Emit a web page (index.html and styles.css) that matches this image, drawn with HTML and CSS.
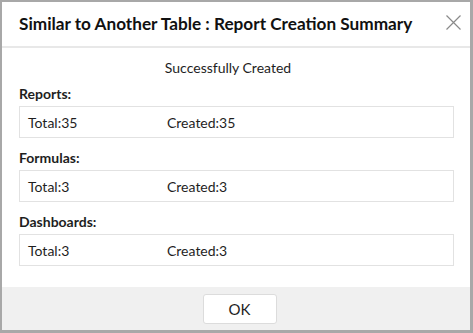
FILE: index.html
```html
<!DOCTYPE html>
<html lang="en">
<head>
  <meta charset="UTF-8" />
  <title>Report Creation Summary</title>
  <link rel="stylesheet" href="styles.css">
</head>
<body>

  <div class="dialog">
    <div class="dialog-header">
      <h1>Similar to Another Table : Report Creation Summary</h1>
      <div class="close">
        <svg width="15" height="15" viewBox="0 0 15 15"><path d="M0.5 0.5 L14.5 14.5 M14.5 0.5 L0.5 14.5" stroke="#8a8a8a" stroke-width="1.2" fill="none"/></svg>
      </div>
    </div>

    <div class="dialog-body">
      <p class="status">Successfully Created</p>

      <h3>Reports:</h3>
      <div class="summary">
        <span class="total">Total:35</span>
        <span>Created:35</span>
      </div>

      <h3>Formulas:</h3>
      <div class="summary">
        <span class="total">Total:3</span>
        <span>Created:3</span>
      </div>

      <h3>Dashboards:</h3>
      <div class="summary">
        <span class="total">Total:3</span>
        <span>Created:3</span>
      </div>
    </div>

    <div class="dialog-footer">
      <button class="btn">OK</button>
    </div>
  </div>

</body>
</html>
```

FILE: styles.css
```css
* { box-sizing: border-box; margin: 0; padding: 0; }
body { font-family: Lato, "Noto Sans", sans-serif; color: #1e1e1e; background: #a8a8a8; }

.dialog {
  width: 473px; height: 333px;
  border-style: solid; border-color: #a8a8a8;
  border-width: 2px 3px 3px 2px;
  background: white;
  display: flex; flex-direction: column;
}

.dialog-header {
  height: 46px;
  display: flex; align-items: center; justify-content: space-between;
  padding: 0 9px 0 17px;
  border-bottom: 2px solid #e8e8e8;
}

.dialog-header h1 {
  font-size: 17.2px; font-weight: bold; color: #111;
  margin-top: -2px;
}

.close { display: flex; margin-top: -4px; cursor: pointer; }

.dialog-body {
  flex: 1;
  padding: 11px 16px 0 17px;
}

.status {
  text-align: center; font-size: 14px; line-height: 17px;
  margin: 0 17px 9px 0;
}

.dialog-body h3 {
  font-size: 14px; font-weight: bold; line-height: 17px;
  margin-top: 11px; margin-bottom: 4px;
}

.dialog-body h3:first-of-type { margin-top: 0; }

.summary {
  height: 32px;
  border: 1px solid #e2e2e2;
  display: flex; align-items: center;
  padding: 0 8px;
  font-size: 14px;
}

.summary .total { width: 139px; }

.dialog-footer {
  height: 43px;
  background: #f0f0f0;
  display: flex; align-items: center; justify-content: center;
  padding-left: 7px;
}

.btn {
  width: 74px; height: 30px;
  background: white;
  border: 1px solid #dcdcdc; border-radius: 3px;
  font-family: Lato, "Noto Sans", sans-serif;
  font-size: 15px; color: #1e1e1e;
}
```
